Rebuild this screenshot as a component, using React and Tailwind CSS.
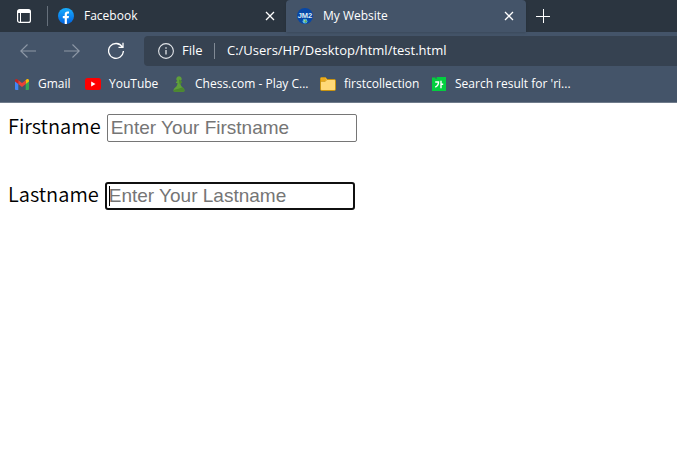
import React from "react";

const uiFont = "font-['Open_Sans','Noto_Sans',sans-serif]";

function CloseIcon() {
  return (
    <svg width="10" height="10" viewBox="0 0 10 10" fill="none" stroke="currentColor" strokeWidth="1.3">
      <path d="M1 1l8 8M9 1l-8 8" />
    </svg>
  );
}

function TabActionsIcon() {
  return (
    <svg width="14" height="14" viewBox="0 0 14 14" fill="none" stroke="#fff">
      <rect x=".6" y=".6" width="12.8" height="12.8" rx="2" strokeWidth="1.2" />
      <path d="M1 1h12v3H1z" fill="#fff" stroke="none" />
      <path d="M3.5 4v9" strokeWidth="1" />
    </svg>
  );
}

function FacebookIcon() {
  return (
    <svg width="16" height="16" viewBox="0 0 16 16" className="shrink-0">
      <defs>
        <linearGradient id="fb" x1="0" y1="0" x2="0" y2="1">
          <stop offset="0" stopColor="#19afff" />
          <stop offset="1" stopColor="#0062e0" />
        </linearGradient>
      </defs>
      <circle cx="8" cy="8" r="8" fill="url(#fb)" />
      <path d="M6.7 15.9v-5.6H4.8V8h1.9V6.4c0-2 1.1-3 2.8-3 .8 0 1.5.1 1.5.1v1.9h-.9c-1 0-1.2.6-1.2 1.2V8h2.1l-.4 2.3H8.9v5.6a8 8 0 0 1-2.2 0z" fill="#fff" />
    </svg>
  );
}

function JmIcon() {
  return (
    <svg width="16" height="16" viewBox="0 0 16 16" className="shrink-0">
      <circle cx="8" cy="8" r="8" fill="#0747a6" />
      <text x="8" y="10.3" textAnchor="middle" fontSize="7.5" fontWeight="700" fill="#dcecf5" fontFamily="Liberation Sans, sans-serif">JM2</text>
      <circle cx="8" cy="13.2" r="2.4" fill="#59b7e8" />
      <path d="M6.5 12.2l2-1 .5 1.3 1 .7-1.2 1.8-1-.9z" fill="#5da94b" />
      <path d="M7 12.2l1.4.3-.4 1.2z" fill="#fff" />
    </svg>
  );
}

function GmailIcon() {
  return (
    <svg width="14" height="11" viewBox="0 0 14 11">
      <path d="M0 1.500v8.500a1 1 0 0 0 1 1h2.300V4z" fill="#4285f4" />
      <path d="M14 1.500v8.500a1 1 0 0 1-1 1h-2.300V4z" fill="#34a853" />
      <path d="M10.700 1.200v3.700L14 2.400V1.500C14 .1 12.500-.5 11.400.5z" fill="#fbbc04" />
      <path d="M3.200 5V1.200L7 4l3.800-2.800V5L7 7.900z" fill="#ea4335" />
      <path d="M0 1.500v.9L3.300 5V1.200L2.600.6C1.500-.4 0 .1 0 1.500z" fill="#c5221f" />
    </svg>
  );
}

function YouTubeIcon() {
  return (
    <svg width="16" height="12" viewBox="0 0 16 12">
      <rect width="16" height="12" rx="2.500" fill="#f00" />
      <path d="M6.200 3.500v5l4.300-2.500z" fill="#fff" />
    </svg>
  );
}

function PawnIcon() {
  return (
    <svg width="12" height="16" viewBox="0 0 12 16">
      <path d="M6 .3a2.700 2.700 0 0 1 1.700 4.800l1.300 1v.8H7.500c.1 2.200.9 3.500 2.300 4.600 1 .8 1.700 1.700 1.700 3.400 0 .6-2.400.9-5.500.9s-5.500-.3-5.500-.9c0-1.700.7-2.600 1.700-3.400C3.600 10.400 4.400 9.100 4.500 6.900H3v-.8l1.300-1A2.700 2.700 0 0 1 6 .3z" fill="#5f9f3a" />
      <path d="M1.200 13.800c2.600-.6 6-1.200 8.400-2.500 1.100.8 1.900 1.900 1.900 3.600 0 .6-2.400.9-5.500.9s-5.500-.3-5.500-.9c0-.4.400-.8.700-1.100z" fill="#4b872f" />
      <path d="M6 3.600l2.200.8-.5.700 1.300 1v.8H7.500c0 .8.200 1.600.5 2.300-1.200-.6-2-2-2-5.600z" fill="#4b872f" />
    </svg>
  );
}

function FolderIcon() {
  return (
    <svg width="16" height="14" viewBox="0 0 16 14">
      <path d="M.5 2A1.200 1.200 0 0 1 1.700.6h3.800L7.200 2.500h7.100a1.200 1.200 0 0 1 1.200 1.200v8.600a1.200 1.200 0 0 1-1.200 1.200H1.700A1.200 1.200 0 0 1 .5 12.300z" fill="#ffd978" stroke="#c8930f" />
      <path d="M1 2a.9.900 0 0 1 .8-.9h3.500l1.300 1.500-1.500 1.700H1z" fill="#eba91b" />
      <path d="M.6 4.500h4.600l1.800-1.900" fill="none" stroke="#c8930f" strokeWidth=".6" />
    </svg>
  );
}

function DictIcon() {
  return (
    <svg width="14" height="14" viewBox="0 0 14 14">
      <path d="M0 .5h3.500v1.200h1.200V0H14v14H0z" fill="#03cf3f" />
      <path d="M3.200 5h3.300c0 2.500-1.200 4.200-3.300 5.200M9 3.700v7.500M9 7.200h2.200" fill="none" stroke="#fff" strokeWidth="1.400" />
    </svg>
  );
}

function Arrow({ flip }) {
  return (
    <svg width="16" height="14" viewBox="0 0 16 14" fill="none" stroke="#8d98a6" strokeWidth="1.100" className={flip ? "rotate-180" : ""}>
      <path d="M7.500 .5L.8 7l6.700 6.500M.8 7H16" />
    </svg>
  );
}

function ReloadIcon() {
  return (
    <svg width="16" height="18" viewBox="0 0 16 18" fill="none" stroke="#fff" strokeWidth="1.300">
      <path d="M14.300 5A7.400 7.400 0 1 0 15.400 9M15 .8V5.300h-4.500" />
    </svg>
  );
}

function InfoIcon() {
  return (
    <svg width="16" height="16" viewBox="0 0 16 16" fill="none" stroke="#e2e5e9" strokeWidth="1.100">
      <circle cx="8" cy="8" r="7.400" />
      <path d="M8 7v4.500M8 4.300v1.400" strokeWidth="1.300" />
    </svg>
  );
}

const bookmarks = [
  { label: "Gmail", icon: <GmailIcon />, width: "w-[71px]" },
  { label: "YouTube", icon: <YouTubeIcon />, width: "w-[86px]" },
  { label: "Chess.com - Play C...", icon: <PawnIcon />, width: "w-[149px]" },
  { label: "firstcollection", icon: <FolderIcon />, width: "w-[111px]" },
  { label: "Search result for 'ri...", icon: <DictIcon />, width: "w-[140px]" },
];

function Field({ id, label, placeholder, focused }) {
  return (
    <div className="flex h-7 items-start gap-1.5">
      <label htmlFor={id} className="font-['Noto_Sans_CJK_KR',sans-serif] text-xl leading-6 font-[350]">{label}</label>
      <div className="relative flex">
        <input
          id={id}
          type="text"
          placeholder={placeholder}
          className={
            "h-7 w-[250px] bg-white font-['Liberation_Sans',Arial,sans-serif] text-[19px] outline-none placeholder:text-[#757575] " +
            (focused ? "rounded-[3px] border-2 border-[#101010] px-0.5" : "rounded-[2px] border border-[#767676] px-[3px]")
          }
        />
        {focused && <span className="absolute top-1 left-1 h-5 w-px bg-black" />}
      </div>
    </div>
  );
}

export default function App() {
  return (
    <div className="min-h-screen overflow-hidden bg-white text-black">
      <header className={"border-b border-[#6f7b8b] bg-[#445469] text-white " + uiFont}>
        <div className="flex h-8 bg-[#2b3540] text-xs">
          <button aria-label="Tab actions" className="flex w-12 shrink-0 items-center justify-center"><TabActionsIcon /></button>
          <div className="-ml-px my-1.5 w-px shrink-0 bg-[#66707b]" />
          <div className="flex w-[238px] shrink-0 items-center pr-[11px] pl-2.5">
            <FacebookIcon />
            <span className="ml-2.5 flex-1">Facebook</span>
            <button aria-label="Close Facebook"><CloseIcon /></button>
          </div>
          <div className="flex w-60 shrink-0 items-center rounded-t bg-[#445469] pr-3 pl-[11px] shadow">
            <JmIcon />
            <span className="ml-2.5 flex-1">My Website</span>
            <button aria-label="Close My Website"><CloseIcon /></button>
          </div>
          <button aria-label="New tab" className="flex w-[34px] items-center justify-center">
            <svg width="14" height="14" viewBox="0 0 14 14" stroke="#fff" strokeWidth="1"><path d="M7.500 0v14M0 7.500h14" /></svg>
          </button>
        </div>
        <div className="flex h-[38px] items-center bg-[#445469]">
          <div className="flex w-36 shrink-0 items-center gap-7 pl-5">
            <button aria-label="Back"><Arrow /></button>
            <button aria-label="Forward"><Arrow flip /></button>
            <button aria-label="Reload"><ReloadIcon /></button>
          </div>
          <div className="flex h-[30px] min-w-0 flex-1 items-center rounded-l bg-[#364251] pl-3.5 text-[13px]">
            <InfoIcon />
            <span className="ml-2 w-6">File</span>
            <span className="mx-2 h-4 w-px bg-[#818a95]" />
            <input aria-label="Address" defaultValue="C:/Users/HP/Desktop/html/test.html" className="ml-1 min-w-0 flex-1 bg-transparent outline-none" />
          </div>
        </div>
        <nav className="flex h-8 items-center bg-[#445469] pb-1 pl-3.5 text-xs">
          {bookmarks.map((b) => (
            <a key={b.label} href="#" className={"flex shrink-0 items-center gap-2 whitespace-nowrap " + b.width}>
              <span className="flex w-4 shrink-0 justify-center">{b.icon}</span>
              {b.label}
            </a>
          ))}
        </nav>
      </header>
      <form className="flex flex-col gap-10 px-2 pt-[11px]">
        <Field id="firstname" label="Firstname" placeholder="Enter Your Firstname" />
        <Field id="lastname" label="Lastname" placeholder="Enter Your Lastname" focused />
      </form>
    </div>
  );
}
